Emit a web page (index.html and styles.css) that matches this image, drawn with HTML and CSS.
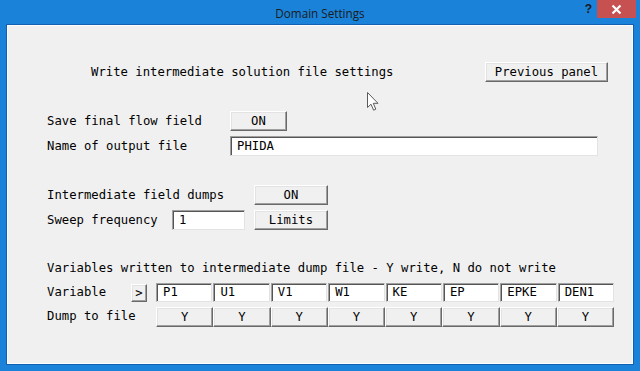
FILE: index.html
```html
<!DOCTYPE html>
<html>
<head>
<meta charset="utf-8">
<link rel="stylesheet" href="styles.css">
</head>
<body>
<div class="window">
  <div class="titlebar">
    <div class="tb-spacer"></div>
    <div class="title">Domain Settings</div>
    <div class="tb-controls">
      <span class="help">?</span>
      <span class="close">
        <svg width="11" height="11" viewBox="0 0 11 11"><path d="M1.5 1.5 L9.5 9.5 M9.5 1.5 L1.5 9.5" stroke="#fff" stroke-width="2.2" fill="none"/></svg>
      </span>
    </div>
  </div>
  <div class="frame">
    <div class="client">
      <div class="row row-head">
        <span class="heading">Write intermediate solution file settings</span>
        <button class="btn btn-prev">Previous panel</button>
      </div>
      <div class="row row-save">
        <span class="label lbl-183">Save final flow field</span>
        <button class="btn btn-on1">ON</button>
      </div>
      <div class="row row-name">
        <span class="label lbl-183">Name of output file</span>
        <div class="field field-name">PHIDA</div>
      </div>
      <div class="row row-dumps">
        <span class="label lbl-207">Intermediate field dumps</span>
        <button class="btn btn-74">ON</button>
      </div>
      <div class="row row-sweep">
        <span class="label lbl-125">Sweep frequency</span>
        <div class="field field-sweep">1</div>
        <button class="btn btn-74">Limits</button>
      </div>
      <div class="row row-vtitle">
        <span class="label">Variables written to intermediate dump file - Y write, N do not write</span>
      </div>
      <div class="row row-var">
        <span class="label lbl-84">Variable</span>
        <button class="btn btn-arrow">&gt;</button>
        <div class="cells cells-in">
          <div class="field cell">P1</div>
          <div class="field cell">U1</div>
          <div class="field cell">V1</div>
          <div class="field cell">W1</div>
          <div class="field cell">KE</div>
          <div class="field cell">EP</div>
          <div class="field cell">EPKE</div>
          <div class="field cell">DEN1</div>
        </div>
      </div>
      <div class="row row-dump">
        <span class="label lbl-109">Dump to file</span>
        <div class="cells cells-btn">
          <button class="btn ybtn">Y</button>
          <button class="btn ybtn">Y</button>
          <button class="btn ybtn">Y</button>
          <button class="btn ybtn">Y</button>
          <button class="btn ybtn">Y</button>
          <button class="btn ybtn">Y</button>
          <button class="btn ybtn">Y</button>
          <button class="btn ybtn">Y</button>
        </div>
      </div>
      <svg class="cursor" width="13" height="20" viewBox="0 0 13 20">
        <path d="M0.5 0.5 L0.5 15.5 L4 12.2 L6.6 18.2 L8.8 17.2 L6.3 11.3 L11 11.3 Z" fill="#fff" stroke="#5a5a5a" stroke-width="1" stroke-linejoin="miter"/>
      </svg>
    </div>
  </div>
</div>
</body>
</html>
```
FILE: styles.css
```css
html, body {
  margin: 0;
  padding: 0;
}
body {
  width: 640px;
  height: 371px;
  overflow: hidden;
}
.window {
  width: 640px;
  height: 371px;
  background: #1a82d8;
  display: flex;
  flex-direction: column;
  box-sizing: border-box;
}
.titlebar {
  height: 24px;
  display: flex;
  flex: none;
}
.tb-spacer {
  width: 60px;
}
.title {
  flex: 1;
  text-align: center;
  font-family: "Open Sans", "Noto Sans", sans-serif;
  font-size: 11.7px;
  color: #1c1c1c;
  line-height: 26px;
}
.tb-controls {
  width: 60px;
  display: flex;
  align-items: flex-start;
}
.help {
  width: 17px;
  font-family: "Liberation Sans", sans-serif;
  font-weight: bold;
  font-size: 12px;
  color: #1a1a1a;
  line-height: 18px;
  text-align: center;
}
.close {
  width: 39px;
  height: 18px;
  background: #c75050;
  display: flex;
  align-items: center;
  justify-content: center;
}
.frame {
  flex: 1;
  margin: 0 6px 6px 6px;
  border: 1px solid #1260b3;
  display: flex;
}
.client {
  flex: 1;
  border: 1px solid #fdfdfd;
  background: #f0f0f0;
  position: relative;
  padding-left: 39px;
  font-family: "DejaVu Sans Mono", "Liberation Mono", monospace;
  font-size: 12.25px;
  font-weight: normal;
  color: #000;
}
.btn {
  font-family: "DejaVu Sans Mono", "Liberation Mono", monospace;
  font-size: 12.25px;
  font-weight: normal;
  color: #000;
  height: 20px;
  padding: 0;
  margin: 0;
  background: #f0f0f0;
  border: 1px solid;
  border-color: #ffffff #696969 #696969 #ffffff;
  box-shadow: inset -1px -1px 0 #a0a0a0, inset 1px 1px 0 #e3e3e3;
  box-sizing: border-box;
  text-align: center;
  line-height: 17px;
}
.field {
  background: #fff;
  height: 20px;
  box-sizing: border-box;
  border: 1px solid;
  border-color: #a0a0a0 #e3e3e3 #e3e3e3 #a0a0a0;
  box-shadow: inset 1px 1px 0 #555;
  padding-left: 6px;
  line-height: 18px;
  white-space: pre;
}
.row {
  display: flex;
  align-items: center;
  height: 20px;
}
.row-head { margin-top: 36px; margin-right: 24px; }
.heading { margin-left: 44px; white-space: pre; }
.btn-prev { margin-left: auto; width: 123px; }
.row-save { margin-top: 29px; }
.row-name { margin-top: 5px; }
.row-dumps { margin-top: 29px; }
.row-sweep { margin-top: 5px; }
.row-vtitle { margin-top: 30px; height: 16px; }
.row-var { margin-top: 7px; height: 19px; }
.row-dump { margin-top: 5px; }

.label { white-space: pre; flex: none; }
.lbl-183 { width: 183px; }
.lbl-207 { width: 207px; }
.lbl-125 { width: 125px; }
.lbl-84 { width: 84px; margin-top: -2px; }
.lbl-109 { width: 109px; margin-top: -2px; }

.btn-on1 { width: 57px; }
.btn-74 { width: 74px; }
.row-sweep .btn-74 { margin-left: 9px; }
.btn-arrow { width: 16px; height: 18px; margin-top: 1px; }

.field-name { width: 368px; }
.field-sweep { width: 73px; }

.cells {
  display: grid;
  grid-template-columns: repeat(8, 1fr);
  width: 458px;
  flex: none;
}
.cells-in { column-gap: 1px; margin-left: 9px; height: 19px; }
.cell { height: 19px; line-height: 17px; }
.ybtn { width: 100%; }

.cursor {
  position: absolute;
  left: 359px;
  top: 66px;
}
```
